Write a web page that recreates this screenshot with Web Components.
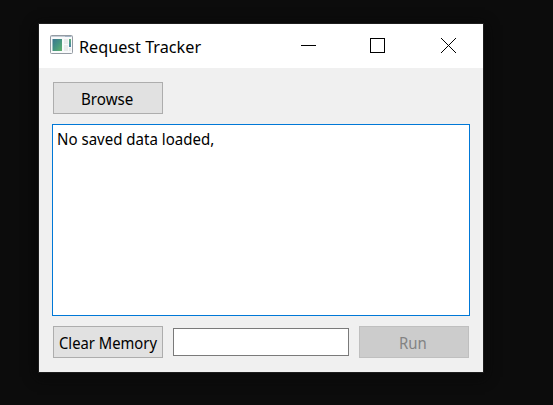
<!DOCTYPE html>
<html lang="en">
<head>
<meta charset="utf-8">
<title>Request Tracker</title>
<style>
html,body{margin:0;height:100%;overflow:hidden;background:#0c0c0c}
body{font-family:"Noto Sans","Open Sans",sans-serif;color:#000}
</style>
</head>
<body>
<app-desktop>
  <app-window>
    <title-bar slot="title"><fit-text width="122" style="font-size:17px;padding-top:2px">Request Tracker</fit-text></title-bar>
    <push-button><fit-text width="52">Browse</fit-text></push-button>
    <text-area><fit-text width="157">No saved data loaded,</fit-text></text-area>
    <button-row>
      <push-button style="padding-right:0"><fit-text width="98">Clear Memory</fit-text></push-button>
      <text-field></text-field>
      <push-button disabled><fit-text width="28">Run</fit-text></push-button>
    </button-row>
  </app-window>
</app-desktop>
<script>
const define = (name, html, ready) => customElements.define(name, class extends HTMLElement {
  constructor() {
    super();
    this.attachShadow({ mode: 'open' }).innerHTML = html;
  }
  connectedCallback() { if (ready) ready(this); }
});

define('app-desktop', `<style>
:host{display:block;box-sizing:border-box;width:553px;height:405px;padding:24px 70px 33px 39px;background:#0c0c0c}
</style><slot></slot>`);

define('app-window', `<style>
:host{display:flex;flex-direction:column;width:444px;height:348px;background:#f0f0f0;box-shadow:0 0 0 1px #1d1d1d,0 3px 12px 2px #080808}
main{display:flex;flex-direction:column;align-items:flex-start;gap:10px;padding:14px 13px 14px;flex:1}
main ::slotted(push-button){margin-left:1px}
</style><slot name="title"></slot><main><slot></slot></main>`);

define('title-bar', `<style>
:host{display:flex;height:44px;background:#fff;align-items:center;box-sizing:border-box;padding-left:11px}
.app{margin:-3px 6px 0 0}
.grow{flex:1}
.ctl{display:flex;width:70px;height:44px;box-sizing:border-box;padding:14px 0 0 28px}
.max{padding-left:27px}
svg{display:block}
</style>
<svg class="app" width="23" height="19" viewBox="0 0 23 19">
<defs><linearGradient id="a" x1="0" y1="0" x2="1" y2="1"><stop offset="0" stop-color="#3a7490"/><stop offset=".5" stop-color="#459482"/><stop offset="1" stop-color="#62b36c"/></linearGradient>
<linearGradient id="b" x1="0" y1="0" x2="0" y2="1"><stop offset="0" stop-color="#5db27a"/><stop offset="1" stop-color="#4a83a5"/></linearGradient></defs>
<rect x=".5" y=".5" width="22" height="18" rx="1" fill="#f9fafb" stroke="#949ba3"/>
<path d="M1 1.5h21" stroke="#c5cdd6"/><path d="M15 1.5h6" stroke="#a2b4c5"/>
<rect x="2.5" y="4" width="9.5" height="12" fill="url(#a)"/>
<rect x="14" y="4" width="4" height="5" fill="#e9ebec"/><rect x="14" y="10" width="4" height="6" fill="#e9ebec"/>
<rect x="19" y="4" width="2" height="8" fill="url(#b)"/><rect x="19" y="13" width="2" height="3" fill="#e9ebec"/>
</svg>
<slot></slot><span class="grow"></span>
<span class="ctl"><svg width="15" height="15"><path d="M0 7.5h15" stroke="#000"/></svg></span>
<span class="ctl max"><svg width="15" height="15"><rect x=".5" y=".5" width="14" height="14" fill="none" stroke="#000"/></svg></span>
<span class="ctl"><svg width="15" height="15"><path d="M0 0L15 15M15 0L0 15" stroke="#000"/></svg></span>`);

define('push-button', `<style>
:host{display:flex;box-sizing:border-box;width:110px;height:32px;flex:none;align-items:center;justify-content:center;background:#e1e1e1;border:1px solid #adadad;padding:2px 2px 0 0}
:host([disabled]){background:#ccc;border-color:#bfbfbf;color:#838383}
</style><slot></slot>`);

define('text-area', `<style>
:host{display:block;box-sizing:border-box;width:418px;height:192px;background:#fff;border:1px solid #0078d7;padding:3px 4px}
</style><slot></slot>`);

define('text-field', `<style>
:host{display:block;box-sizing:border-box;width:176px;height:28px;background:#fff;border:1px solid #7a7a7a}
</style>`);

define('button-row', `<style>
:host{display:flex;align-items:center;gap:10px;margin-left:1px}
</style><slot></slot>`);

/* Renders a label condensed or stretched to the given width. */
define('fit-text', `<style>
:host{display:block;height:22px;font-size:16px;line-height:22px;white-space:nowrap}
span{display:inline-block;transform-origin:0 50%}
</style><span><slot></slot></span>`, el => {
  const w = +el.getAttribute('width');
  const s = el.shadowRoot.querySelector('span');
  el.style.width = w + 'px';
  s.style.transform = `scaleX(${w / s.offsetWidth})`;
});
</script>
</body>
</html>
